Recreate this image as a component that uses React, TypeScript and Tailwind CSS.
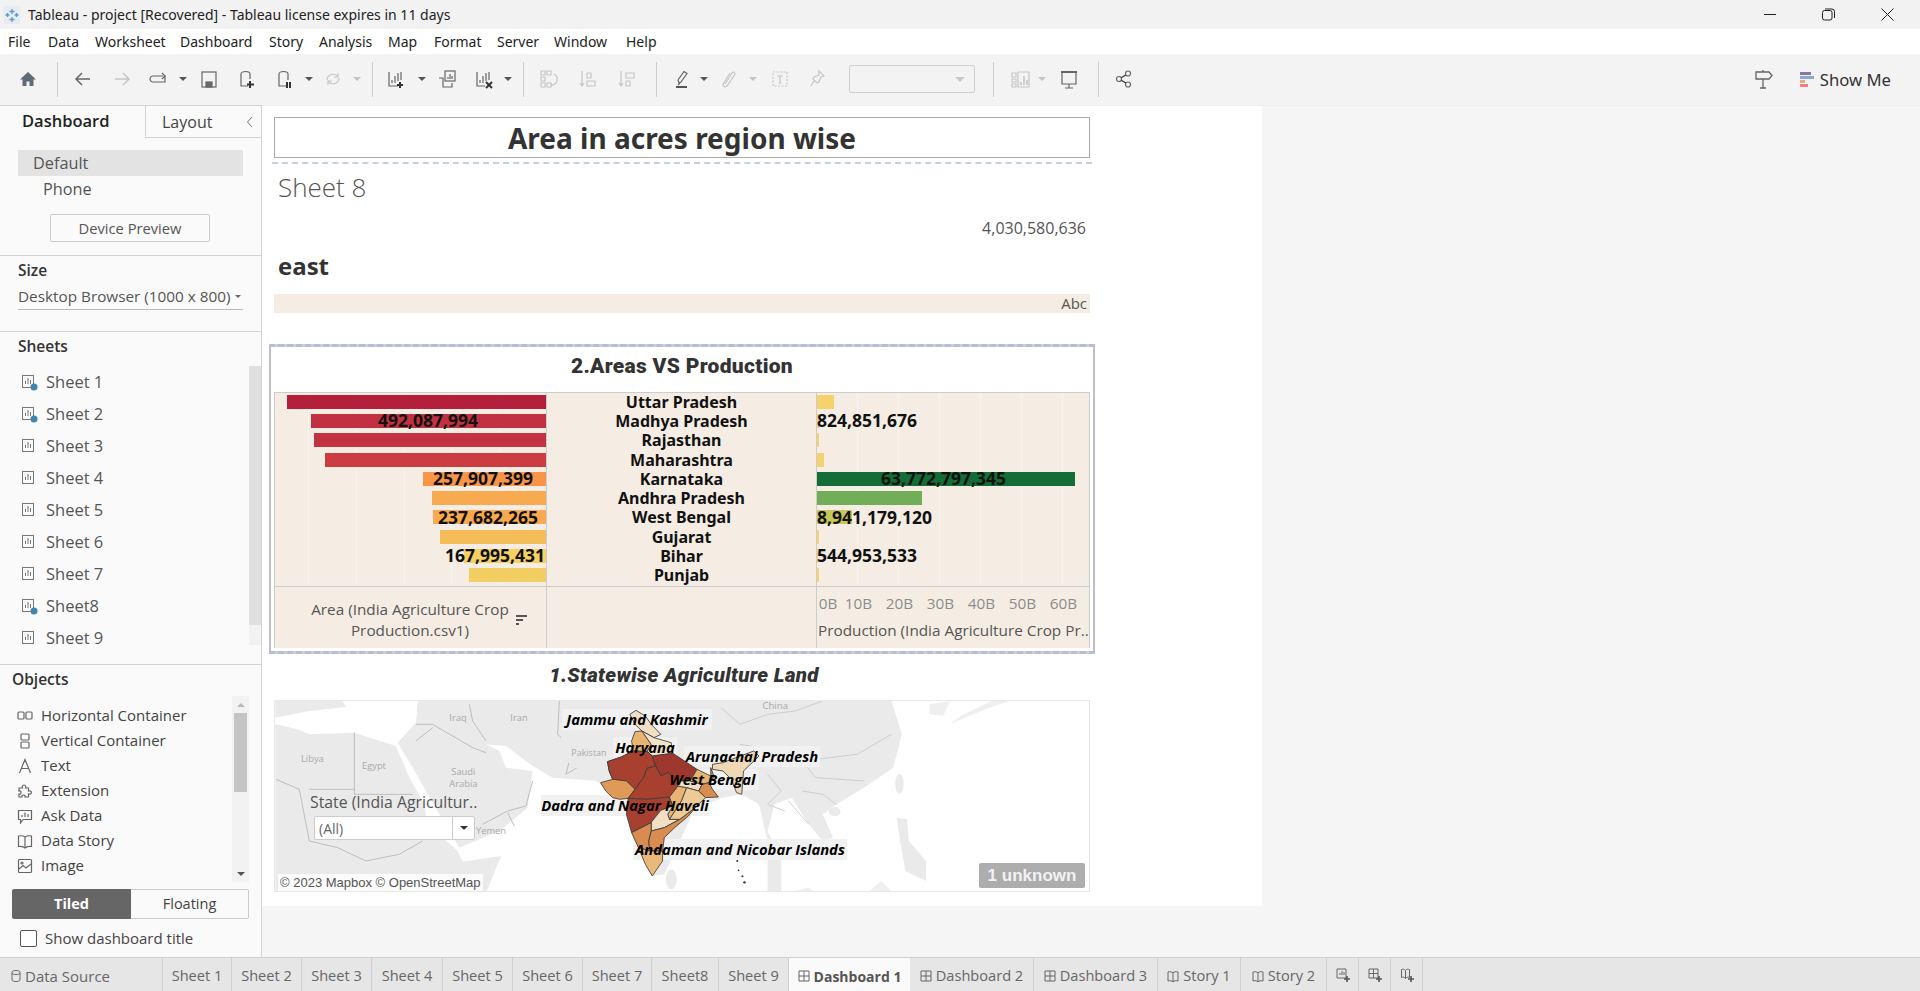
import React from "react";

const S = ({ children, w = 20, h = 20, vb = "0 0 20 20", c = "" }: { children: React.ReactNode; w?: number; h?: number; vb?: string; c?: string }) => (
  <svg width={w} height={h} viewBox={vb} fill="none" stroke="currentColor" strokeWidth="1.2" className={c}>{children}</svg>
);
const Caret = ({ ml, dim }: { ml: string; dim?: boolean }) => (
  <div className={`${ml} w-2 h-5 flex items-center justify-center shrink-0`}>
    <div className={`w-0 h-0 border-l-[4px] border-r-[4px] border-t-[4px] border-l-transparent border-r-transparent ${dim ? "border-t-[#c4c4c4]" : "border-t-[#555]"}`} />
  </div>
);
const Sep = ({ ml }: { ml: string }) => <div className={`${ml} w-px h-[35px] bg-[#cfcfcf] shrink-0`} />;
const T = ({ ml, children, dim }: { ml: string; children: React.ReactNode; dim?: boolean }) => (
  <div className={`${ml} w-5 h-5 shrink-0 flex items-center justify-center ${dim ? "text-[#c6c6c6]" : "text-[#666]"}`}>{children}</div>
);

const sheets = [
  { n: "Sheet 1", dot: true }, { n: "Sheet 2", dot: true }, { n: "Sheet 3" }, { n: "Sheet 4" }, { n: "Sheet 5" },
  { n: "Sheet 6" }, { n: "Sheet 7" }, { n: "Sheet8", dot: true }, { n: "Sheet 9" },
];

const SheetIcon = ({ dot }: { dot?: boolean }) => (
  <svg width="18" height="18" viewBox="0 0 18 18" fill="none" className="shrink-0">
    <rect x="1.5" y="2.5" width="11" height="12" stroke="#777" />
    <path d="M4.5 11V8M7 11V5M9.5 11V7" stroke="#777" />
    {dot && <circle cx="13" cy="14" r="3.5" fill="#3f88ad" />}
  </svg>
);

const objects: [string, React.ReactNode][] = [
  ["Horizontal Container", <S w={16} h={16} vb="0 0 16 16"><rect x="1" y="4" width="6" height="7" rx="1" /><rect x="9" y="4" width="6" height="7" rx="1" /></S>],
  ["Vertical Container", <S w={16} h={16} vb="0 0 16 16"><rect x="4" y="1" width="8" height="6" rx="1" /><rect x="4" y="9" width="8" height="6" rx="1" /></S>],
  ["Text", <S w={16} h={16} vb="0 0 16 16"><path d="M2.500 15 8 1.500 13.500 15M4.500 10.500h7" /></S>],
  ["Extension", <S w={16} h={16} vb="0 0 16 16"><path d="M7 2c2 0 2 2 1.500 3h3v3c1-.5 3 0 3 1.500s-2 2-3 1.500v3H8c.5-1 0-2-1.500-2S4.500 13 5 14H2v-3c1 .5 2 0 2-1.500S3 7.500 2 8V5h3.500C5 4 5 2 7 2Z" /></S>],
  ["Ask Data", <S w={16} h={16} vb="0 0 16 16"><path d="M1.500 2.500h13v9H6L3.500 15v-3.500h-2Z" /><path d="M5 9V7M8 9V4.500M11 9V6" /></S>],
  ["Data Story", <S w={16} h={16} vb="0 0 16 16"><path d="M8 4C6 2.500 4 2.500 1.500 3v10.500C4 13 6 13 8 15c2-2 4-2 6.500-1.500V3C12 2.500 10 2.500 8 4Zm0 0v11" /></S>],
  ["Image", <S w={16} h={16} vb="0 0 16 16"><rect x="1.500" y="1.500" width="13" height="13" rx="1" /><path d="m2 11 4-3.500 3 2.500 5-4" /><circle cx="5" cy="5" r="1" /></S>],
];

const tabs: [string, string][] = [
  ["w-[69px]", "Sheet 1"], ["w-[70px]", "Sheet 2"], ["w-[70px]", "Sheet 3"], ["w-[71px]", "Sheet 4"], ["w-[70px]", "Sheet 5"],
  ["w-[70px]", "Sheet 6"], ["w-[69px]", "Sheet 7"], ["w-[67px]", "Sheet8"], ["w-[70px]", "Sheet 9"],
];

const rows = [
  { name: "Uttar Pradesh", lw: "w-[259px]", lc: "bg-[#b41f3c]", rw: "w-[17px]", rc: "bg-[#f5d26c]" },
  { name: "Madhya Pradesh", lw: "w-[235px]", lc: "bg-[#c13142]", ll: "492,087,994", lp: "right-[68px]", rw: "w-[2px]", rc: "bg-[#f5d26c]", rl: "824,851,676", rp: "left-0" },
  { name: "Rajasthan", lw: "w-[232px]", lc: "bg-[#c33243]", rw: "w-[2px]", rc: "bg-[#f5d26c]" },
  { name: "Maharashtra", lw: "w-[221px]", lc: "bg-[#cb3d41]", rw: "w-[7px]", rc: "bg-[#f5d26c]" },
  { name: "Karnataka", lw: "w-[123px]", lc: "bg-[#f99548]", ll: "257,907,399", lp: "right-[13px]", rw: "w-[258px]", rc: "bg-[#146c36]", rl: "63,772,797,345", rp: "left-[64px]" },
  { name: "Andhra Pradesh", lw: "w-[114px]", lc: "bg-[#f7aa4f]", rw: "w-[105px]", rc: "bg-[#72ad58]" },
  { name: "West Bengal", lw: "w-[113px]", lc: "bg-[#f9a94f]", ll: "237,682,265", lp: "right-[8px]", rw: "w-[35px]", rc: "bg-[#c7c658]", rl: "8,941,179,120", rp: "left-0" },
  { name: "Gujarat", lw: "w-[106px]", lc: "bg-[#f4bd5a]", rw: "w-[2px]", rc: "bg-[#f5d26c]" },
  { name: "Bihar", lw: "w-[82px]", lc: "bg-[#f5d063]", ll: "167,995,431", lp: "right-px", rw: "w-[1px]", rc: "bg-[#f5d26c]", rl: "544,953,533", rp: "left-0" },
  { name: "Punjab", lw: "w-[77px]", lc: "bg-[#f2ce62]", rw: "w-[2px]", rc: "bg-[#f5d26c]" },
];

const valueFont = "font-['Noto_Sans',sans-serif] text-[17.500px] font-bold text-[#111] leading-none whitespace-nowrap";

const MapLabel = ({ c, t }: { c: string; t: string }) => (
  <div className={`absolute ${c} h-[21px] flex items-center justify-center font-['Open_Sans',sans-serif] italic font-bold text-[14.800px] text-black whitespace-nowrap`}>{t}</div>
);

const states: [string, string][] = [
  ["#f0dfc4", "M200 70 218 58 245 75 262 100 290 130 270 140 235 120 215 100Z"],
  ["#e8b472", "M215 122 235 120 262 160 250 182 210 180 205 150Z"],
  ["#f3e3c9", "M235 120 270 140 320 155 325 187 265 195 250 182 262 160Z"],
  ["#e6a968", "M135 212 175 198 210 180 250 182 265 195 275 225 250 232 240 260 215 295 190 270 150 265 140 240Z"],
  ["#a8402f", "M135 212 175 198 210 180 250 182 265 195 275 225 250 232 240 260 215 295 190 270 150 265 140 240Z"],
  ["#e09a57", "M115 275 150 265 190 270 215 295 195 322 170 325 150 320 130 300Z"],
  ["#9e372d", "M265 195 325 187 395 235 375 270 340 270 310 245 290 255 275 225Z"],
  ["#a8402f", "M215 295 240 260 250 232 275 225 290 255 310 245 340 270 340 285 315 318 250 325 195 322Z"],
  ["#a8402f", "M195 322 250 325 315 318 325 345 290 358 265 390 262 395 205 425 190 370Z"],
  ["#e8b472", "M340 285 365 290 350 330 315 385 310 370 325 345 315 318Z"],
  ["#f0dfc4", "M262 395 265 390 290 358 325 345 310 370 315 385 345 385 300 410 262 420Z"],
  ["#d98c4f", "M205 425 262 395 262 420 255 450 258 480 225 470Z"],
  ["#d98c4f", "M262 420 300 410 345 385 390 350 370 375 330 410 300 440 295 480 258 480 255 450Z"],
  ["#eab878", "M225 470 258 480 295 480 295 510 265 555 245 520Z"],
  ["#f0dfc4", "M340 270 375 270 410 280 400 300 365 290 340 285Z"],
  ["#e8b472", "M375 270 395 235 435 255 430 275 410 280Z"],
  ["#eeca96", "M350 330 365 290 400 300 420 320 390 350 345 385 315 385Z"],
  ["#d98c4f", "M435 230 445 258 430 275 440 295 457 318 420 320 400 300 410 280 430 275 435 255Z"],
  ["#efd9b5", "M440 220 470 215 560 180 575 195 530 240 525 310 510 305 495 265 470 240 440 235Z"],
];

const MapArt = () => (
  <svg width="816" height="192" viewBox="0 0 816 192" className="absolute inset-0">
    <g transform="translate(-9,-10) scale(0.3333)" stroke="none" fill="#eaeaea">
      <path d="M28 100 95 115 130 130 265 125 390 165 430 260 475 340 480 375 530 440 575 480 590 512 705 495 660 606 28 606Z" />
      <path d="M455 30 450 95 395 155 440 230 520 370 580 470 700 420 785 350 800 240 720 230 700 180 660 160 720 165 800 225 860 260 1000 270 1040 200 1200 200 1200 30Z" />
      <path d="M28 30H230L240 48 130 60 28 80Z" />
      <g fill="none" stroke="#bdbdbd" strokeWidth="3">
        <path d="M265 125V310H440M30 265 100 295 130 450 215 470 300 510 400 490 470 450M130 295H265" />
        <path d="M450 100H500L620 170 660 185M610 40 620 90 660 150M650 400 725 360 780 345 800 270M725 365 745 405" />
        <path d="M880 30 875 130 920 170 900 250 1000 190M500 110 450 150" />
      </g>
      <g fill="#a9a9a9" stroke="none" fontFamily="Open Sans, sans-serif" fontSize="28">
        <text x="550" y="90">Iraq</text>
        <text x="733" y="90">Iran</text>
        <text x="105" y="214">Libya</text>
        <text x="288" y="234">Egypt</text>
        <text x="556" y="252">Saudi</text>
        <text x="550" y="288">Arabia</text>
        <text x="916" y="196">Pakistan</text>
        <text x="630" y="428">Yemen</text>
      </g>
    </g>
    <g transform="translate(286,-10) scale(0.3443,0.3333)">
      <g stroke="none" fill="#eaeaea">
        <path d="M0 30H960L990 130 965 230 880 290 800 340 760 370 790 440 760 450 720 400 670 320 620 340 600 420 640 510 640 606H600V450L575 340 525 310 470 320 390 350 300 550 265 555 190 370 115 280 0 200Z" />
        <ellipse cx="320" cy="565" rx="16" ry="30" />
        <ellipse cx="795" cy="362" rx="17" ry="14" />
        <ellipse cx="983" cy="278" rx="12" ry="30" />
        <path d="M1070 40 1130 30 1110 75 1070 70ZM1130 100 1220 60 1300 30 1250 30 1160 75Z" fill="#efefef" />
        <path d="M975 380 1005 385 1010 450 1060 510 1060 570 1000 540 985 450Z" />
        <path d="M890 606 930 570 965 606ZM650 606 720 590 740 606Z" fill="#efefef" />
      </g>
      <g fill="none" stroke="#c9c9c9" strokeWidth="2.500">
        <path d="M465 50 520 100 600 70 680 60 760 30M520 160 580 170 700 210 860 190 960 130M600 250 640 300 600 340 650 360M700 300 760 310 800 340M720 400 660 330M700 210 740 260 880 270" />
      </g>
      <text x="585" y="55" fill="#a9a9a9" stroke="none" fontSize="28" fontFamily="Open Sans, sans-serif">China</text>
    </g>
    <g fill="#f1f1f1" stroke="none">
      <rect x="287" y="8" width="150" height="21" />
      <rect x="338" y="36" width="64" height="21" />
      <rect x="409" y="45" width="136" height="21" />
      <rect x="391" y="68" width="93" height="21" />
      <rect x="266" y="94" width="168" height="21" />
      <rect x="358" y="138" width="214" height="21" />
    </g>
    <g transform="translate(286,-10) scale(0.3443,0.3333)">
      <text x="30" y="196" fill="#a9a9a9" stroke="none" fontSize="26" fontFamily="Open Sans, sans-serif">Pakistan</text>
      <g stroke="#3a3a3a" strokeWidth="2.500" strokeLinejoin="round">
        {states.map(([f, d], i) => <path key={i} fill={f} d={d} />)}
      </g>
      <g fill="#333" stroke="none">
        <circle cx="512" cy="510" r="3" /><circle cx="516" cy="538" r="2.500" /><circle cx="527" cy="556" r="3" /><circle cx="533" cy="574" r="3.500" />
      </g>
    </g>
  </svg>
);

export default function App() {
  return (
    <div className="w-screen h-screen overflow-hidden flex flex-col bg-[#f5f5f5] font-['Open_Sans',sans-serif] text-[#555]">
      {/* Title bar */}
      <div className="h-[29px] shrink-0 bg-[#f2f2f2] flex items-center pl-1 font-['Noto_Sans',sans-serif] text-[14px] text-[#222]">
        <svg width="16" height="18" viewBox="0 0 16 18" className="shrink-0" stroke="#5b9bc7" strokeWidth="1.300">
          <rect x="0" y="0" width="16" height="18" fill="#e6ecf2" stroke="none" />
          <path d="M8 3v5M5.500 5.500h5M8 11v5M5.500 13.500h5M3.500 7v4M1.500 9h4M12.500 7v4M10.500 9h4" />
        </svg>
        <span className="ml-2">Tableau - project [Recovered] - Tableau license expires in 11 days</span>
        <div className="ml-auto flex items-center h-full text-[#222]">
          <div className="w-[12px] h-px bg-[#222] mr-[46px]" />
          <svg width="13" height="13" viewBox="0 0 13 13" fill="none" stroke="#222" className="mr-[46px]"><rect x="0.500" y="2.500" width="9.500" height="9.500" rx="2" /><path d="M3 1h7a2.500 2.500 0 0 1 2.500 2.500V10" /></svg>
          <svg width="13" height="13" viewBox="0 0 13 13" stroke="#222" className="mr-[26px]"><path d="m.5.500 12 12M12.500.500l-12 12" /></svg>
        </div>
      </div>
      {/* Menu */}
      <div className="h-[25px] shrink-0 bg-white flex items-center pl-2 font-['Noto_Sans',sans-serif] text-[14px] text-[#222]">
        {[["w-[40px]", "File"], ["w-[47px]", "Data"], ["w-[85px]", "Worksheet"], ["w-[89px]", "Dashboard"], ["w-[50px]", "Story"], ["w-[69px]", "Analysis"], ["w-[46px]", "Map"], ["w-[63px]", "Format"], ["w-[57px]", "Server"], ["w-[72px]", "Window"], ["w-[40px]", "Help"]].map(([w, t]) => (
          <div key={t} className={`${w} whitespace-nowrap`}>{t}</div>
        ))}
      </div>
      {/* Toolbar */}
      <div className="h-[51px] shrink-0 bg-[#f3f3f3] flex items-center pb-[1px]">
        <T ml="ml-[18px]"><svg width="18" height="18" viewBox="0 0 18 18" fill="#5f6b78"><path d="M9 2 1 9.500h2.500V16h4v-4.500h3V16h4V9.500H17Z" /></svg></T>
        <Sep ml="ml-[19px]" />
        <T ml="ml-[15px]"><S><path d="M17 10H3M9 4l-6 6 6 6" strokeWidth="1.500" /></S></T>
        <T ml="ml-[19px]" dim><S><path d="M3 10h14M11 4l6 6-6 6" strokeWidth="1.500" /></S></T>
        <T ml="ml-[17px]"><S><path d="M16 6v7H4a2.500 2.500 0 0 1 0-6h10M13 4l3 3-3 3" /></S></T>
        <Caret ml="ml-[10px]" />
        <T ml="ml-[12px]"><S><rect x="3" y="3" width="14" height="15" /><rect x="7" y="13" width="6" height="5" fill="currentColor" /></S></T>
        <T ml="ml-[18px]"><S><path d="M4 5v12h7M4 5a4.500 2.500 0 0 1 9 0v5" /><path d="M13 12v7M10 15.500h7" strokeWidth="2" stroke="#333" /></S></T>
        <T ml="ml-[18px]"><S><path d="M4 5v12h7M4 5a4.500 2.500 0 0 1 9 0v6" /><path d="M12 13v6M15 13v6" strokeWidth="2" stroke="#333" /></S></T>
        <Caret ml="ml-[10px]" />
        <T ml="ml-[10px]" dim><S><path d="M4 11a6 6 0 0 1 11-3M16 9a6 6 0 0 1-11 3M15 4v4h-4M5 16v-4h4" /></S></T>
        <Caret ml="ml-[10px]" dim />
        <Sep ml="ml-[11px]" />
        <T ml="ml-[13px]"><S><path d="M3 3v14h9M6 14v-3M9 14V7M12 12V4M15 11V3" /><path d="M14 13v6M11 16h6" strokeWidth="2" stroke="#333" /></S></T>
        <Caret ml="ml-[12px]" />
        <T ml="ml-[11px]"><S><rect x="8" y="2" width="10" height="10" /><path d="M11 10V8M13 10V5M15 10V7M2 9h4v9h9v-4" /></S></T>
        <T ml="ml-[17px]"><S><path d="M3 3v14h8M6 14v-3M9 14V7M12 12V4M15 11V3" /><path d="m12 13 6 6M18 13l-6 6" strokeWidth="2" stroke="#333" /></S></T>
        <Caret ml="ml-[10px]" />
        <Sep ml="ml-[11px]" />
        <T ml="ml-[15px]" dim><S><path d="M2 2h4v4H2zM8 2h4v4H8zM2 8h4v4H2zM2 14h4v4H2zM8 14h4v4H8zM15 5a6 6 0 0 1-1 11l-2-1" /></S></T>
        <T ml="ml-[19px]" dim><S><path d="M4 2v15M2 14l2 3 2-3M9 4h4v5H9zM9 12h8v5H9z" /></S></T>
        <T ml="ml-[19px]" dim><S><path d="M4 2v15M2 14l2 3 2-3M9 4h8v5H9zM9 12h4v5H9z" /></S></T>
        <Sep ml="ml-[19px]" />
        <T ml="ml-[16px]"><S><path d="M6 14 5 11 11 2.500l3 2L8 13ZM5 16l2-2" /><path d="M3 18h11" strokeWidth="2" stroke="#555" /></S></T>
        <Caret ml="ml-[7px]" />
        <T ml="ml-[11px]" dim><S><path d="M6 15 13 4c1.500-2 4 0 2.500 2L8 17c-2 2-5 0-3.500-2.500L11 4" /></S></T>
        <Caret ml="ml-[10px]" dim />
        <T ml="ml-[13px]" dim><S><rect x="3" y="3" width="14" height="14" strokeDasharray="2 1.500" /><path d="M7 7h6M10 7v7M8.500 14h3" /></S></T>
        <T ml="ml-[17px]" dim><S><path d="M12 2l5 5-3 1-2 5-2 1-4-4 1-2 5-2Zm-5 10-3 5" /></S></T>
        <div className="ml-[22px] w-[126px] h-[28px] shrink-0 border border-[#d0d0d0] rounded-[2px] flex items-center justify-end pr-[9px]">
          <div className="w-0 h-0 border-l-[5px] border-r-[5px] border-t-[5px] border-l-transparent border-r-transparent border-t-[#c9c9c9]" />
        </div>
        <Sep ml="ml-[18px]" />
        <T ml="ml-[16px]" dim><S><path d="M2 4h4v4H2zM2 10h4v3H2zM2 15h4v3H2zM8 3h11v15H8z" /><path d="M11 16v-3M14 16V7M17 16v-5" strokeWidth="1.600" /></S></T>
        <Caret ml="ml-[8px]" dim />
        <T ml="ml-[13px]"><S><path d="M2 3h16" strokeWidth="2" /><path d="M3 3v12h14V3M10 15v4M6 19h8" /></S></T>
        <Sep ml="ml-[19px]" />
        <T ml="ml-[15px]"><S><circle cx="14" cy="4.500" r="2.500" /><circle cx="5" cy="10" r="2.500" /><circle cx="14" cy="15.500" r="2.500" /><path d="M7.200 8.800 11.800 6M7.200 11.200l4.600 2.800" stroke="#333" /></S></T>
        <div className="ml-auto flex items-center text-[#666] pt-[1px]">
          <svg width="20" height="20" viewBox="0 0 20 20" fill="none" stroke="#666" strokeWidth="1.300"><path d="M2 3h13l3 3.500-3 3.500H2ZM9 10v9M6 19h6M9 1v2" /></svg>
          <div className="ml-[26px] w-[14px] flex flex-col gap-px">
            <div className="w-[11px] h-[3px] bg-[#8a76a0]" />
            <div className="w-[14px] h-[3px] bg-[#85a9d0]" />
            <div className="w-[5px] h-[3px] bg-[#eda97a]" />
            <div className="w-[8px] h-[3px] bg-[#ee7d85]" />
          </div>
          <span className="ml-[6px] mr-[29px] font-['Noto_Sans',sans-serif] text-[16.700px] text-[#333]">Show Me</span>
        </div>
      </div>
      {/* Main */}
      <div className="flex-1 flex min-h-0">
        {/* Sidebar */}
        <div className="w-[262px] shrink-0 bg-[#fafafa] border-r border-[#d4d4d4] border-t flex flex-col">
          <div className="h-[32px] flex shrink-0">
            <div className="w-[146px] border-r border-[#d4d4d4] pl-[22px] pt-[3px] text-[16.500px] font-semibold text-[#222]">Dashboard</div>
            <div className="flex-1 border-b border-[#d4d4d4] flex items-center">
              <span className="ml-[16px] text-[16px] text-[#444]">Layout</span>
              <svg width="8" height="12" viewBox="0 0 8 12" fill="none" stroke="#777" className="ml-auto mr-[7px]"><path d="M6 1 1.500 6 6 11" /></svg>
            </div>
          </div>
          <div className="h-[118px] shrink-0 border-b border-[#d4d4d4] pt-[12px]">
            <div className="mx-[18px] w-[225px] h-[26px] bg-[#e3e3e3] pl-[15px] flex items-center text-[16.300px] text-[#555]">Default</div>
            <div className="ml-[43px] h-[26px] flex items-center text-[16.300px] text-[#555]">Phone</div>
            <div className="ml-[50px] mt-[12px] w-[160px] h-[28px] border border-[#ccc] rounded-[2px] flex items-center justify-center text-[14.700px] text-[#555]">Device Preview</div>
          </div>
          <div className="h-[76px] shrink-0 border-b border-[#d4d4d4] pl-[18px]">
            <div className="pt-[3px] text-[15.500px] font-semibold text-[#333]">Size</div>
            <div className="mt-[1px] w-[225px] h-[27px] border-b border-[#bbb] flex items-center justify-between text-[15.300px] text-[#555] whitespace-nowrap">
              <span>Desktop Browser (1000 x 800)</span>
              <div className="w-0 h-0 border-l-[3px] border-r-[3px] border-t-[3px] border-l-transparent border-r-transparent border-t-[#666] mr-[2px]" />
            </div>
          </div>
          <div className="h-[333px] shrink-0 border-b border-[#d4d4d4] flex flex-col">
            <div className="pl-[18px] pt-[3px] h-[34px] text-[15.500px] font-semibold text-[#333] shrink-0">Sheets</div>
            <div className="flex-1 flex min-h-0">
              <div className="flex-1 pl-[21px]">
                {sheets.map((s) => (
                  <div key={s.n} className="h-[32px] flex items-center gap-[7px] text-[16.500px] text-[#555]">
                    <SheetIcon dot={s.dot} /><span>{s.n}</span>
                  </div>
                ))}
              </div>
              <div className="w-[12px] shrink-0 h-[279px] bg-[#f2f2f2]"><div className="h-[259px] bg-[#e0e0e0]" /></div>
            </div>
          </div>
          <div className="flex-1 flex flex-col min-h-0">
            <div className="pl-[12px] pt-[3px] h-[31px] text-[15.500px] font-semibold text-[#333] shrink-0">Objects</div>
            <div className="h-[186px] shrink-0 flex">
              <div className="w-[232px] pl-[17px] pt-[7px] shrink-0">
                {objects.map(([n, ic]) => (
                  <div key={n} className="h-[25px] flex items-center gap-[8px] text-[15px] whitespace-nowrap">
                    <span className="w-[16px] text-[#666]">{ic}</span><span className="text-[#444]">{n}</span>
                  </div>
                ))}
              </div>
              <div className="w-[17px] shrink-0 bg-[#f2f2f2] flex flex-col items-center">
                <div className="h-[17px] flex items-center"><div className="w-0 h-0 border-l-[4px] border-r-[4px] border-b-[4px] border-l-transparent border-r-transparent border-b-[#bbb]" /></div>
                <div className="w-[13px] h-[79px] bg-[#c4c4c4]" />
                <div className="mt-auto h-[17px] flex items-center"><div className="w-0 h-0 border-l-[4px] border-r-[4px] border-t-[4px] border-l-transparent border-r-transparent border-t-[#555]" /></div>
              </div>
            </div>
            <div className="ml-[12px] mt-[7px] w-[237px] h-[30px] flex text-[14.500px]">
              <div className="w-[119px] bg-[#666] text-white font-bold rounded-l-[2px] flex items-center justify-center">Tiled</div>
              <div className="flex-1 border border-l-0 border-[#ccc] rounded-r-[2px] flex items-center justify-center text-[#444]">Floating</div>
            </div>
            <div className="ml-[20px] mt-[8px] flex items-center gap-[8px]">
              <div className="w-[17px] h-[17px] border border-[#555] rounded-[2px] bg-white" />
              <span className="text-[15px] text-[#444]">Show dashboard title</span>
            </div>
          </div>
        </div>
        {/* Canvas */}
        <div className="flex-1 min-w-0 border-t border-[#efefef]">
          <div className="w-[1000px] h-[800px] bg-white pl-[12px] pt-[11px]">
            <div className="w-[816px] h-[41px] border border-[#aaa] flex items-center justify-center pt-[1px] font-['Noto_Sans',sans-serif] text-[28px] font-bold text-[#333]">Area in acres region wise</div>
            <div className="-ml-[2px] mt-[4px] w-[820px] border-t-2 border-dashed border-[#c5cfe0]" />
            <div className="w-[816px] h-[130px]">
              <div className="pl-[4px] pt-[6px] text-[26px] font-light text-[#555] leading-[34px]">Sheet 8</div>
              <div className="text-right pr-[4px] mt-[14px] text-[16px] leading-[20px] text-[#555]">4,030,580,636</div>
              <div className="pl-[4px] mt-[13px] text-[24px] font-bold text-[#333] leading-[30px]">east</div>
            </div>
            <div className="w-[816px] h-[19px] bg-[#f5ede3] flex items-center justify-end pr-[3px] text-[15px] text-[#555]">Abc</div>
            <div className="-ml-[5px] mt-[31px] w-[826px] h-[310px] border-x-2 border-y-[3px] border-x-[#bfbfc4] border-y-[#b4bed6] [border-top-style:dashed] [border-bottom-style:dashed] bg-[#cfcfd2]">
              <div className="h-full bg-white px-[3px] flex flex-col">
                <div className="h-[45px] shrink-0 flex items-center justify-center pb-[6px] font-['Roboto',sans-serif] font-black text-[21px] tracking-[0.300px] text-[#333]">2.Areas VS Production</div>
                <div className="w-[816px] h-[256px] bg-[#f5ede3] border-t border-l border-r border-[#ccc] flex flex-col">
                  <div className="h-[194px] shrink-0 flex relative border-b border-[#ccc]">
                    <div className="w-[272px] shrink-0 border-r border-[#ccc] relative">
                      <div className="absolute inset-0 flex">
                        <div className="ml-[33px] w-px h-full bg-[#f8f3ec]" />
                        <div className="ml-[47px] w-px h-full bg-[#f8f3ec]" />
                        <div className="ml-[47px] w-px h-full bg-[#f8f3ec]" />
                        <div className="ml-[46px] w-px h-full bg-[#f8f3ec]" />
                        <div className="ml-[47px] w-px h-full bg-[#f8f3ec]" />
                      </div>
                      <div className="relative -mt-px">
                        {rows.map((r) => (
                          <div key={r.name} className="h-[19.300px] flex items-center justify-end relative">
                            <div className={`${r.lw} ${r.lc} h-[14px]`} />
                            {r.ll && <span className={`absolute ${r.lp} ${valueFont}`}>{r.ll}</span>}
                          </div>
                        ))}
                      </div>
                    </div>
                    <div className="w-[270px] shrink-0 border-r border-[#ccc]">
                      <div className="-mt-px">
                        {rows.map((r) => (
                          <div key={r.name} className="h-[19.300px] flex items-center justify-center font-['Noto_Sans',sans-serif] text-[16px] font-bold text-[#111] leading-none">{r.name}</div>
                        ))}
                      </div>
                    </div>
                    <div className="flex-1 relative">
                      <div className="absolute inset-0 flex">
                        {[0, 1, 2, 3, 4, 5].map((i) => (
                          <div key={i} className="ml-[40px] w-px h-full bg-[#f8f3ec]" />
                        ))}
                      </div>
                      <div className="relative -mt-px">
                        {rows.map((r) => (
                          <div key={r.name} className="h-[19.300px] flex items-center relative">
                            <div className={`${r.rw} ${r.rc} h-[14px]`} />
                            {r.rl && <span className={`absolute ${r.rp} ${valueFont}`}>{r.rl}</span>}
                          </div>
                        ))}
                      </div>
                    </div>
                  </div>
                  <div className="flex-1 flex min-h-0">
                    <div className="w-[272px] shrink-0 border-r border-[#ccc] flex items-center relative">
                      <div className="w-[272px] pr-[1px] pt-[4px] text-center text-[15.300px] leading-[21px] text-[#555]">Area (India Agriculture Crop<br />Production.csv1)</div>
                      <svg width="12" height="11" viewBox="0 0 12 11" className="absolute left-[241px] top-[28px]" fill="#555"><path d="M0 0h11v2H0zM0 4h7v2H0zM0 8h3v2H0z" /></svg>
                    </div>
                    <div className="w-[270px] shrink-0 border-r border-[#ccc]" />
                    <div className="flex-1 min-w-0 flex flex-col pl-px">
                      <div className="mt-[6px] flex text-[15.300px] leading-[20px] text-[#8c8c8c]">
                        <div className="w-[20px] text-center whitespace-nowrap">0B</div>
                        {["10B", "20B", "30B", "40B", "50B", "60B"].map((t) => (
                          <div key={t} className="w-[41px] text-center">{t}</div>
                        ))}
                      </div>
                      <div className="mt-[7px] text-[15.300px] leading-[20px] text-[#555] whitespace-nowrap">Production (India Agriculture Crop Pr..</div>
                    </div>
                  </div>
                </div>
              </div>
            </div>
            <div className="w-[816px] h-[46px] flex items-center justify-center pb-[3px] pl-[4px] font-['Roboto',sans-serif] font-black italic text-[20.500px] tracking-[0.300px] text-[#333]">1.Statewise Agriculture Land</div>
            <div className="w-[816px] h-[192px] relative border border-[#e8e8e8] overflow-hidden">
              <MapArt />
              <MapLabel c="left-[287px] top-[8px] w-[150px]" t="Jammu and Kashmir" />
              <MapLabel c="left-[338px] top-[36px] w-[64px]" t="Haryana" />
              <MapLabel c="left-[409px] top-[45px] w-[136px]" t="Arunachal Pradesh" />
              <MapLabel c="left-[391px] top-[68px] w-[93px]" t="West Bengal" />
              <MapLabel c="left-[266px] top-[94px] w-[168px]" t="Dadra and Nagar Haveli" />
              <MapLabel c="left-[358px] top-[138px] w-[214px]" t="Andaman and Nicobar Islands" />
              <div className="absolute left-[35px] top-[91px] text-[15.800px] leading-[20px] text-[#555] whitespace-nowrap">State (India Agricultur..</div>
              <div className="absolute left-[39px] top-[115px] w-[161px] h-[24px] bg-white border border-[#ccc] rounded-[2px] flex items-center text-[14px] text-[#666]">
                <span className="pl-[4px] flex-1">(All)</span>
                <div className="w-[22px] h-full border-l border-[#ccc] flex items-center justify-center">
                  <div className="w-0 h-0 border-l-[4px] border-r-[4px] border-t-[4px] border-l-transparent border-r-transparent border-t-[#333]" />
                </div>
              </div>
              <div className="absolute left-[3px] top-[173px] h-[17px] px-[2px] bg-white/80 flex items-center font-['Liberation_Sans',sans-serif] text-[13px] text-[#555] whitespace-nowrap">© 2023 Mapbox © OpenStreetMap</div>
              <div className="absolute left-[704px] top-[162px] w-[106px] h-[25px] bg-[#adadad] rounded-[2px] flex items-center justify-center font-['Liberation_Sans',sans-serif] font-bold text-[17px] text-[#f2f2f2]">1 unknown</div>
            </div>
          </div>
        </div>
      </div>
      {/* Bottom tabs */}
      <div className="h-[34px] shrink-0 bg-[#e6e6e6] border-t border-[#cfcfcf] flex items-stretch text-[14.600px] text-[#666]">
        <div className="w-[163px] shrink-0 border-r border-[#d0d0d0] flex items-center pl-[10px] gap-[3px] pt-[3px] text-[15px]">
          <svg width="12" height="14" viewBox="0 0 12 14" fill="none" stroke="#666"><path d="M2 3v8c0 2 8 2 8 0V3C10 1 2 1 2 3Zm0 1c0 2 8 2 8 0" /></svg>
          Data Source
        </div>
        {tabs.map(([w, t]) => (
          <div key={t} className={`${w} shrink-0 border-r border-[#d0d0d0] flex items-center justify-center pt-[3px]`}>{t}</div>
        ))}
        <div className="w-[121px] shrink-0 bg-[#fafafa] flex items-center justify-center gap-[4px] font-bold text-[14px] text-[#555] pt-[3px]">
          <svg width="12" height="12" viewBox="0 0 12 12" fill="none" stroke="#666"><path d="M1 1h10v10H1ZM6 1v10M1 6h10" /></svg>
          Dashboard 1
        </div>
        {["Dashboard 2", "Dashboard 3"].map((t) => (
          <div key={t} className="w-[124px] shrink-0 border-r border-[#d0d0d0] flex items-center justify-center gap-[4px] pt-[3px]">
            <svg width="12" height="12" viewBox="0 0 12 12" fill="none" stroke="#666"><path d="M1 1h10v10H1ZM6 1v10M1 6h10" /></svg>
            {t}
          </div>
        ))}
        {[["w-[83px]", "Story 1"], ["w-[86px]", "Story 2"]].map(([w, t]) => (
          <div key={t} className={`${w} shrink-0 border-r border-[#d0d0d0] flex items-center justify-center gap-[4px] pt-[3px]`}>
            <svg width="12" height="13" viewBox="0 0 12 13" fill="none" stroke="#666"><path d="M6 3C5 1.500 3 1.500 1 2v9c2-.5 4-.5 5 1 1-1.500 3-1.500 5-1V2C9 1.500 7 1.500 6 3Zm0 0v9" /></svg>
            {t}
          </div>
        ))}
        {[0, 1, 2].map((i) => (
          <div key={i} className="w-[32px] shrink-0 border-r border-[#d0d0d0] flex items-center justify-center">
            <svg width="16" height="16" viewBox="0 0 16 16" fill="none" stroke="#666">
              {i === 0 && <path d="M2 2h9v9H2ZM5 8V6M7 8V4M9 8V5" />}
              {i === 1 && <path d="M2 2h9v9H2ZM6.500 2v9M2 6.500h9" />}
              {i === 2 && <path d="M6.500 3.500C5.500 2 4 2 2.500 2.500v8c1.500-.5 3-.5 4 1 1-1.500 2.500-1.500 4-1v-8C9 2 7.500 2 6.500 3.500Zm0 0v8" />}
              <path d="M12 9v6M9 12h6" stroke="#555" strokeWidth="1.600" />
            </svg>
          </div>
        ))}
      </div>
    </div>
  );
}
